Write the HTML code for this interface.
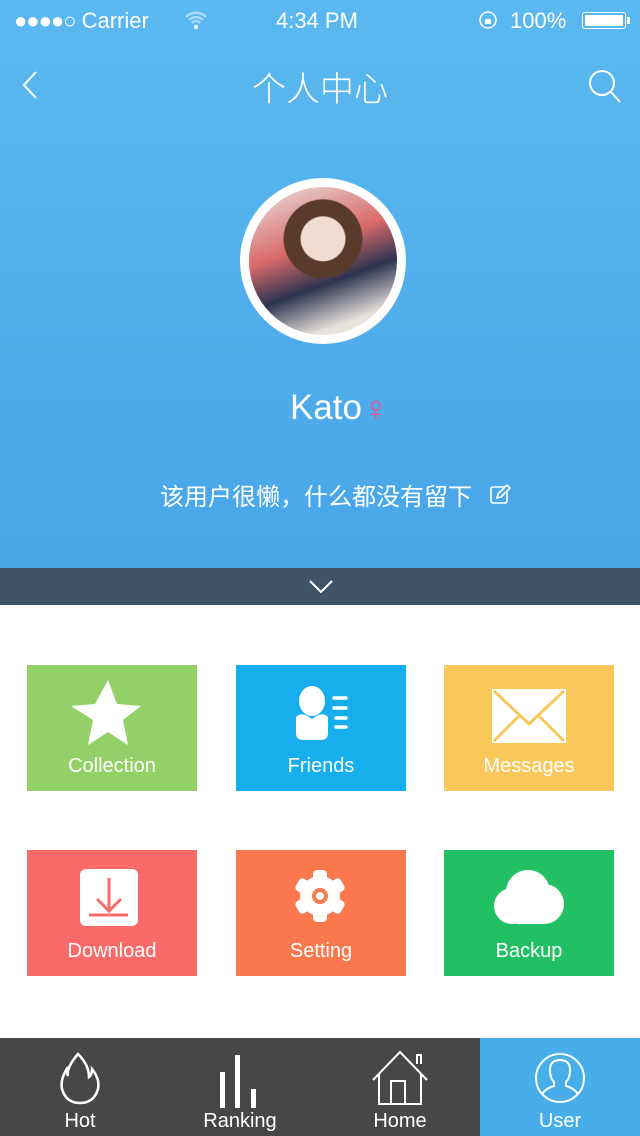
<!DOCTYPE html>
<html><head><meta charset="utf-8"><style>
*{margin:0;padding:0;box-sizing:border-box}
body{width:640px;height:1136px;overflow:hidden;background:#fff;font-family:"Liberation Sans","Noto Sans CJK SC",sans-serif;position:relative}
.hdr{position:absolute;left:0;top:0;width:640px;height:568px;background:linear-gradient(#5bb8f0,#48a6e7)}
.abs{position:absolute}
.w{color:#fff}
.tile{position:absolute;width:170px;height:126px;color:#fff;font-size:20px;text-align:center}
.tile span{position:absolute;left:0;right:0;top:90px}
.tab{position:absolute;top:1038px;width:160px;height:98px;color:#fff;font-size:20px;text-align:center}
.tab span{position:absolute;left:0;right:0;top:72px}
</style></head><body>
<div class="hdr"></div>
<div class="abs w" style="left:14px;top:8px;font-size:22px;">
<span style="letter-spacing:-1px">●●●●○</span>&nbsp;Carrier</div>
<svg class="abs" style="left:184px;top:10px" width="24" height="20" viewBox="0 0 24 20"><path d="M2 7a14 14 0 0 1 20 0M5 10a10 10 0 0 1 14 0M8 13a5 5 0 0 1 8 0" stroke="#a9d9f7" stroke-width="2.5" fill="none"/><circle cx="12" cy="17" r="2" fill="#fff"/></svg>
<div class="abs w" style="left:276px;top:8px;font-size:22px">4:34 PM</div>
<svg class="abs" style="left:478px;top:10px" width="22" height="20"><circle cx="10" cy="10" r="8" stroke="#fff" fill="none" stroke-width="1.5"/><rect x="7" y="9" width="6" height="5" fill="#fff"/></svg>
<div class="abs w" style="left:510px;top:8px;font-size:22px">100%</div>
<div class="abs" style="left:582px;top:12px;width:44px;height:17px;border:1.5px solid #fff;border-radius:3px;padding:2px"><div style="background:#fff;width:100%;height:100%"></div></div>
<div class="abs" style="left:627px;top:17px;width:3px;height:7px;background:#fff"></div>
<svg class="abs" style="left:18px;top:70px" width="24" height="30"><path d="M18 2L6 15l12 13" stroke="#fff" stroke-width="2" fill="none"/></svg>
<div class="abs w" style="left:0;width:640px;top:62px;text-align:center;font-size:34px;font-weight:300">个人中心</div>
<svg class="abs" style="left:586px;top:68px" width="38" height="36"><circle cx="16" cy="15" r="12" stroke="#fff" stroke-width="2" fill="none"/><path d="M25 24l9 10" stroke="#fff" stroke-width="2"/></svg>
<div class="abs" style="left:240px;top:178px;width:166px;height:166px;border-radius:50%;background:#fff"></div>
<div class="abs" style="left:249px;top:187px;width:148px;height:148px;border-radius:50%;overflow:hidden;background:radial-gradient(circle at 50% 35%,#f2dccf 0 18%,#5a3a2a 19% 32%,transparent 33%),linear-gradient(160deg,#e8e4e0 0%,#d96a6a 40%,#2c3350 62%,#e9e3dd 85%)"></div>
<div class="abs w" style="left:290px;top:388px;font-size:35px">Kato<span style="color:#e8538a;font-size:36px;vertical-align:-2px">♀</span></div>
<div class="abs w" style="left:160px;top:477px;font-size:24px">该用户很懒，什么都没有留下</div>
<svg class="abs" style="left:489px;top:483px" width="22" height="22"><rect x="2" y="4" width="16" height="16" rx="2" stroke="#fff" stroke-width="1.6" fill="none"/><path d="M8 15l1-4 9-9 3 3-9 9z" stroke="#fff" stroke-width="1.6" fill="#4aa8e8"/></svg>
<div class="abs" style="left:0;top:568px;width:640px;height:37px;background:#3f5469"></div>
<svg class="abs" style="left:308px;top:577px" width="26" height="18"><path d="M2 4l11 11L24 4" stroke="#fff" stroke-width="2" fill="none"/></svg>

<div class="tile" style="left:27px;top:665px;background:#94d068"><svg class="abs" style="left:45px;top:12px" width="72" height="72" viewBox="0 0 72 72"><path d="M36 3l9 24 24 2-18 14 5 25-20-13-20 13 5-25L-1 29l24-2z" fill="#fff"/></svg><span>Collection</span></div>
<div class="tile" style="left:236px;top:665px;background:#17aeee"><svg class="abs" style="left:56px;top:20px" width="60" height="60"><ellipse cx="20" cy="16" rx="13" ry="15" fill="#fff"/><path d="M4 32q6-6 16 2q10-8 16-2v16q0 7-7 7H11q-7 0-7-7z" fill="#fff"/><path d="M42 13h12M42 23h12M44 33h10M44 42h10" stroke="#fff" stroke-width="3.5" stroke-linecap="round"/></svg><span>Friends</span></div>
<div class="tile" style="left:444px;top:665px;background:#f9c85a"><svg class="abs" style="left:48px;top:24px" width="74" height="56"><rect x="0" y="0" width="74" height="54" fill="#fff"/><path d="M2 2l35 33 35-33M2 52l26-26M72 52L46 26" stroke="#f9c85a" stroke-width="3" fill="none"/></svg><span>Messages</span></div>
<div class="tile" style="left:27px;top:850px;background:#f96b68"><svg class="abs" style="left:53px;top:19px" width="58" height="58"><rect width="58" height="57" rx="6" fill="#fff"/><path d="M29 9v33M17 30l12 12 12-12M9 46h39" stroke="#f96b68" stroke-width="3" fill="none"/></svg><span>Download</span></div>
<div class="tile" style="left:236px;top:850px;background:#f9784e"><svg class="abs" style="left:56px;top:18px" width="56" height="56" viewBox="0 0 56 56"><g fill="#fff"><circle cx="28" cy="28" r="20"/><rect x="21" y="2" width="14" height="52" rx="4"/><rect x="21" y="2" width="14" height="52" rx="4" transform="rotate(60 28 28)"/><rect x="21" y="2" width="14" height="52" rx="4" transform="rotate(120 28 28)"/></g><circle cx="28" cy="28" r="6" stroke="#f9784e" stroke-width="4" fill="none"/></svg><span>Setting</span></div>
<div class="tile" style="left:444px;top:850px;background:#22c064"><svg class="abs" style="left:44px;top:18px" width="80" height="60"><circle cx="40" cy="24" r="22" fill="#fff"/><circle cx="24" cy="38" r="18" fill="#fff"/><circle cx="56" cy="36" r="20" fill="#fff"/><rect x="22" y="30" width="40" height="26" rx="8" fill="#fff"/></svg><span>Backup</span></div>

<div class="abs" style="left:0;top:1038px;width:640px;height:98px;background:#474747"></div>
<div class="abs" style="left:480px;top:1038px;width:160px;height:98px;background:#47aeea"></div>
<div class="tab" style="left:0"><svg class="abs" style="left:56px;top:12px" width="48" height="56"><path d="M22 4q-12 14-10 22-2-4 0-9-8 12-6 22 4 14 18 14t18-14q2-10-6-20 0 6-3 8 0-12-11-23z" stroke="#fff" stroke-width="2.5" fill="none"/></svg><span>Hot</span></div>
<div class="tab" style="left:160px"><svg class="abs" style="left:55px;top:14px" width="50" height="56"><rect x="5" y="20" width="5" height="36" fill="#fff"/><rect x="20" y="3" width="5" height="53" fill="#fff"/><rect x="36" y="37" width="5" height="19" fill="#fff"/></svg><span>Ranking</span></div>
<div class="tab" style="left:320px"><svg class="abs" style="left:50px;top:12px" width="60" height="56"><path d="M3 30L30 2l27 28M9 24v30h42V24M21 54V31h14v23M47 14V5h4v9" stroke="#fff" stroke-width="2" fill="none"/></svg><span>Home</span></div>
<div class="tab" style="left:480px"><svg class="abs" style="left:54px;top:14px" width="52" height="52"><circle cx="26" cy="26" r="24" stroke="#fff" stroke-width="2" fill="none"/><path d="M8 42q4-6 12-8v-4q-4-4-4-12 0-10 10-10t10 10q0 8-4 12v4q8 2 12 8" stroke="#fff" stroke-width="2" fill="none"/></svg><span>User</span></div>
</body></html>
